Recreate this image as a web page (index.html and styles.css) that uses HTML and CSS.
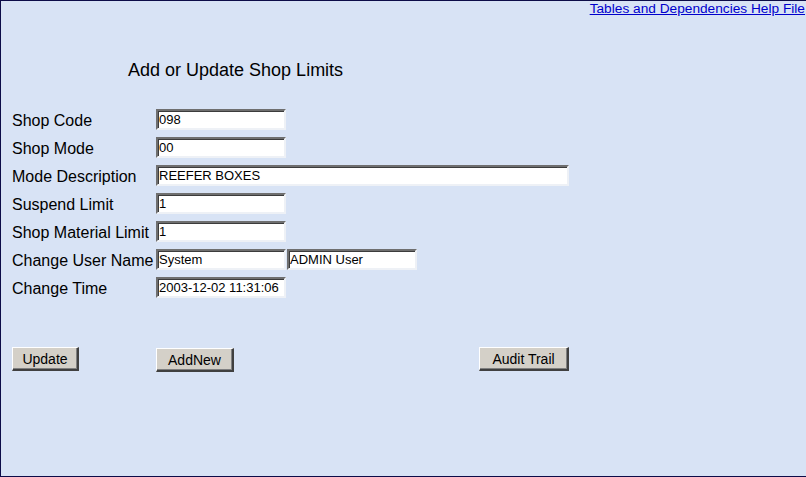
FILE: index.html
```html
<!DOCTYPE html>
<html>
<head>
<meta charset="utf-8">
<title>Add or Update Shop Limits</title>
<link rel="stylesheet" href="styles.css">
</head>
<body>
<div class="page">
  <div class="topbar"><a class="help-link" href="#">Tables and Dependencies Help File</a></div>
  <div class="title">Add or Update Shop Limits</div>
  <div class="form">
    <div class="label">Shop Code</div>
    <div class="field"><input class="inp" type="text" value="098"></div>
    <div class="label">Shop Mode</div>
    <div class="field"><input class="inp" type="text" value="00"></div>
    <div class="label">Mode Description</div>
    <div class="field"><input class="inp inp-wide" type="text" value="REEFER BOXES"></div>
    <div class="label">Suspend Limit</div>
    <div class="field"><input class="inp" type="text" value="1"></div>
    <div class="label">Shop Material Limit</div>
    <div class="field"><input class="inp" type="text" value="1"></div>
    <div class="label">Change User Name</div>
    <div class="field pair"><input class="inp" type="text" value="System"><input class="inp" type="text" value="ADMIN User"></div>
    <div class="label">Change Time</div>
    <div class="field"><input class="inp" type="text" value="2003-12-02 11:31:06"></div>
  </div>
  <div class="actions">
    <div class="cell"><button class="btn btn-update" type="button">Update</button></div>
    <div class="cell split">
      <button class="btn btn-add" type="button">AddNew</button>
      <button class="btn btn-audit" type="button">Audit Trail</button>
    </div>
  </div>
</div>
</body>
</html>
```
FILE: styles.css
```css
html, body {
  margin: 0;
  padding: 0;
  overflow: hidden;
  background: #d8e3f5;
}
.page {
  box-sizing: border-box;
  width: 806px;
  height: 477px;
  border-top: 1px solid #0c0c48;
  border-left: 1px solid #0c0c48;
  border-bottom: 1px solid #0c0c48;
  background: #d8e3f5;
  font-family: "Liberation Sans", Arial, sans-serif;
  color: #000;
}
.topbar {
  text-align: right;
  padding-right: 1px;
  font-size: 13.7px;
  line-height: 16px;
  height: 16px;
}
.help-link {
  color: #0000cc;
  text-decoration: underline;
}
.title {
  margin-top: 43px;
  padding-left: 127px;
  font-size: 18px;
  line-height: 20px;
  height: 20px;
}
.form {
  margin-top: 28px;
  padding-left: 11px;
  display: grid;
  grid-template-columns: 144px 413px;
  grid-auto-rows: 28px;
  align-items: start;
}
.label {
  font-size: 16px;
  line-height: 26px;
  white-space: nowrap;
}
.field {
  padding-top: 1px;
  display: flex;
  gap: 1px;
}
.inp {
  box-sizing: border-box;
  width: 130px;
  height: 21px;
  margin: 0;
  padding: 0 2px 0 1px;
  font-family: "Liberation Sans", Arial, sans-serif;
  font-size: 13px;
  color: #000;
  background: #fff;
  border-style: solid;
  border-width: 2px;
  border-top-color: #6f6f6f;
  border-left-color: #6f6f6f;
  border-bottom-color: #eef1f6;
  border-right-color: #eef1f6;
  box-shadow: inset 1px 1px 0 #3c3c3c;
  outline: none;
}
.inp-wide {
  width: 413px;
}
.actions {
  margin-top: 43px;
  padding-left: 11px;
  display: grid;
  grid-template-columns: 144px 413px;
}
.split {
  display: flex;
  justify-content: space-between;
  align-items: flex-start;
}
.btn {
  box-sizing: border-box;
  height: 24px;
  margin: 0;
  padding: 0;
  font-family: "Liberation Sans", Arial, sans-serif;
  font-size: 14px;
  color: #000;
  background: #d4d0c8;
  border-style: solid;
  border-width: 1px 2px 2px 1px;
  border-top-color: #ffffff;
  border-left-color: #ffffff;
  border-right-color: #404040;
  border-bottom-color: #404040;
  box-shadow: inset -1px -1px 0 #808080;
}
.btn-update {
  width: 67px;
}
.btn-add {
  width: 78px;
  margin-top: 1px;
}
.btn-audit {
  width: 90px;
}
```
